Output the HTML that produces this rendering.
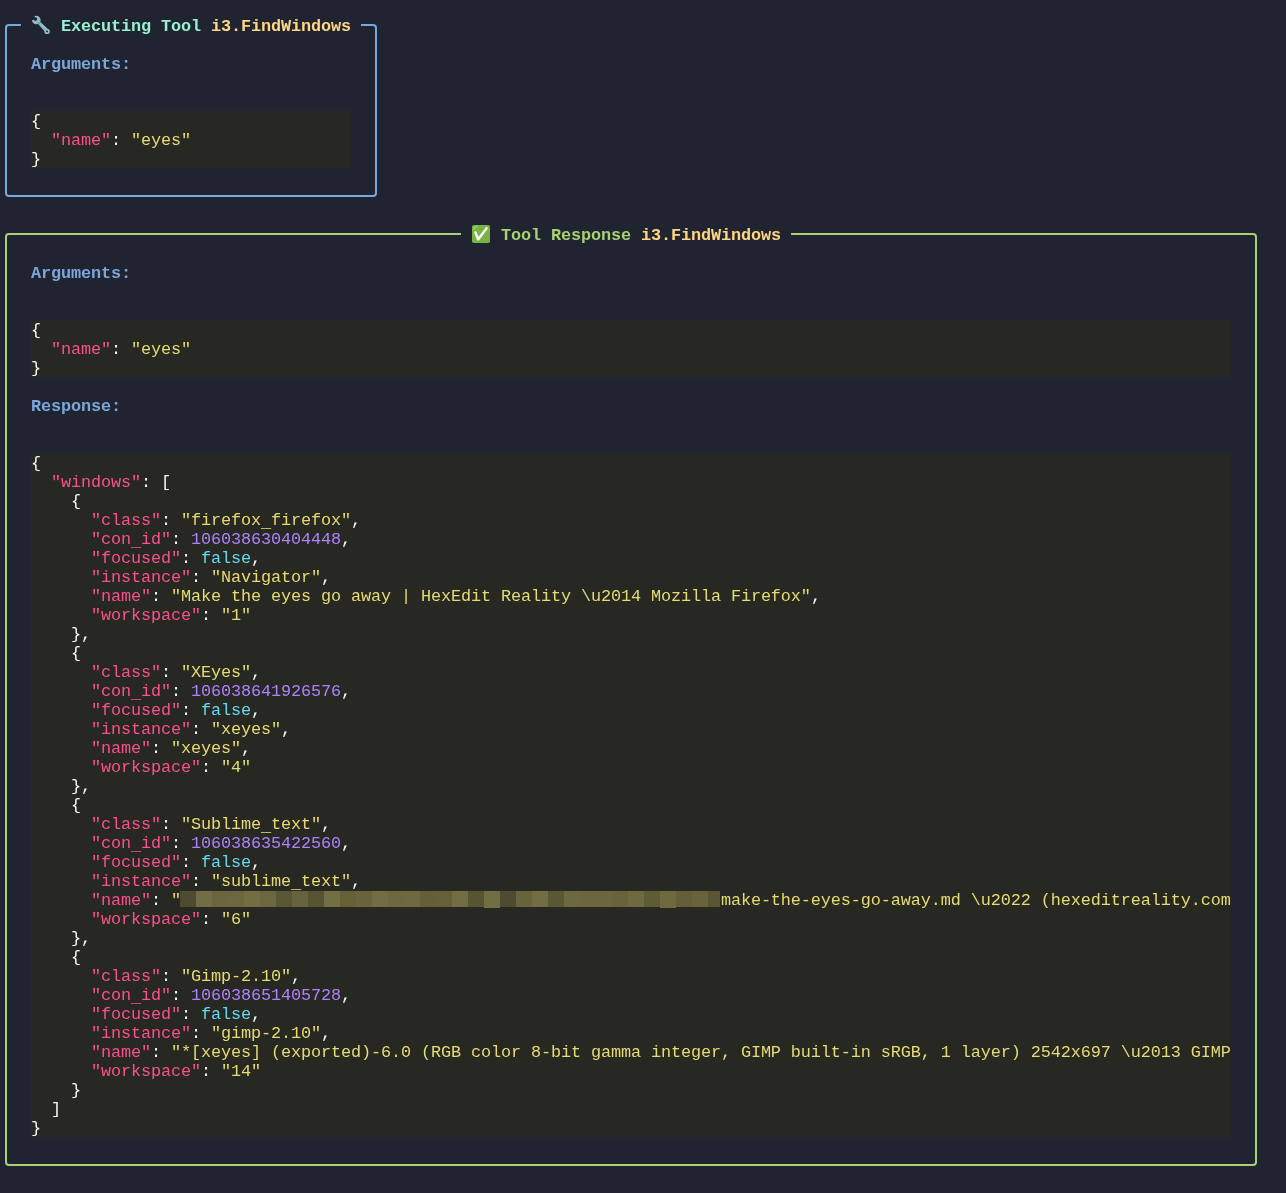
<!DOCTYPE html>
<html><head><meta charset="utf-8"><style>
html,body{margin:0;padding:0;background:#202330;width:1286px;height:1193px;overflow:hidden;position:relative}
.ln{position:absolute;white-space:pre;font-family:"Liberation Mono",monospace;font-size:16.85px;line-height:19px;height:19px;color:#f8f8f2}
.b{font-weight:bold}
.u{position:relative;top:2px}
.ln{letter-spacing:-0.11px;margin-top:1px;will-change:transform}
.box{position:absolute;box-sizing:border-box;border:2px solid;border-radius:4px}
</style></head><body>
<div class="box" style="left:5px;top:24px;width:372px;height:173px;border-color:#7aa8dc"></div>
<div style="position:absolute;left:21px;top:22px;width:340px;height:6px;background:#202330"></div>
<svg style="position:absolute;left:31px;top:15px" width="20" height="20" viewBox="0 0 20 20">
<defs><mask id="wm"><rect x="-5" y="-5" width="30" height="30" fill="#fff"/><circle cx="4.4" cy="4.1" r="1.8" fill="#000"/><path d="M4.4 4.1 L2.7 -1.5 L-3 -3 L-1.8 6.4 Z" fill="#000"/><circle cx="16" cy="16.4" r="0.95" fill="#000"/></mask>
<linearGradient id="wg" x1="0" y1="0" x2="1" y2="1"><stop offset="0" stop-color="#9cc6d2"/><stop offset="1" stop-color="#86b0c0"/></linearGradient></defs>
<g mask="url(#wm)" fill="url(#wg)">
<circle cx="5.3" cy="5.0" r="4.3"/>
<path d="M6.6 8.6 L8.8 6.6 L17.8 15.0 L15.0 17.8 Z" fill="#8fb9c8"/>
<circle cx="16.1" cy="16.4" r="2.7" fill="#8fb9c8"/>
<circle cx="8.3" cy="8.3" r="1.1" fill="#3f8c9c" opacity="0.55"/>
<path d="M9.6 7.9 L16.4 14.2" stroke="#b2d8e2" stroke-width="0.8" opacity="0.6"/>
</g>
</svg>
<div class="ln b" style="top:16px;left:61px"><span style="color:#98f0d2">Executing Tool </span><span style="color:#ffd782">i3.FindWindows</span></div>
<div class="ln b" style="top:54px;left:31px"><span style="color:#7aa8dc">Arguments:</span></div>
<div style="position:absolute;left:31px;top:111px;width:320px;height:57px;background:#272822"></div>
<div class="ln " style="top:111px;left:31px"><span style="color:#f8f8f2">{</span></div>
<div class="ln " style="top:130px;left:31px"><span style="color:#f8f8f2">  </span><span style="color:#fb508e">&quot;name&quot;</span><span style="color:#f8f8f2">: </span><span style="color:#e6db74">&quot;eyes&quot;</span></div>
<div class="ln " style="top:149px;left:31px"><span style="color:#f8f8f2">}</span></div>
<div class="box" style="left:5px;top:233px;width:1252px;height:933px;border-color:#a8d272"></div>
<div style="position:absolute;left:461px;top:231px;width:330px;height:6px;background:#202330"></div>
<svg style="position:absolute;left:472px;top:225px" width="18" height="18" viewBox="0 0 18 18">
<rect x="0" y="0" width="18" height="18" rx="1.8" fill="#7ab342"/>
<path d="M1.6 4.6 Q2.2 2.0 5.0 1.4" fill="none" stroke="#b9dc98" stroke-width="1.1" opacity="0.7" stroke-linecap="round"/>
<path d="M3.4 7.4 L6.1 14.4 L14.6 3.2" fill="none" stroke="#ffffff" stroke-width="2.4" stroke-linecap="round" stroke-linejoin="round"/>
</svg>
<div class="ln b" style="top:225px;left:501px"><span style="color:#a8d272">Tool Response </span><span style="color:#ffd782">i3.FindWindows</span></div>
<div class="ln b" style="top:263px;left:31px"><span style="color:#7aa8dc">Arguments:</span></div>
<div style="position:absolute;left:31px;top:320px;width:1200px;height:57px;background:#272822"></div>
<div class="ln " style="top:320px;left:31px"><span style="color:#f8f8f2">{</span></div>
<div class="ln " style="top:339px;left:31px"><span style="color:#f8f8f2">  </span><span style="color:#fb508e">&quot;name&quot;</span><span style="color:#f8f8f2">: </span><span style="color:#e6db74">&quot;eyes&quot;</span></div>
<div class="ln " style="top:358px;left:31px"><span style="color:#f8f8f2">}</span></div>
<div class="ln b" style="top:396px;left:31px"><span style="color:#7aa8dc">Response:</span></div>
<div style="position:absolute;left:31px;top:453px;width:1200px;height:684px;background:#272822"></div>
<div class="ln " style="top:453px;left:31px"><span style="color:#f8f8f2">{</span></div>
<div class="ln " style="top:472px;left:31px"><span style="color:#f8f8f2">  </span><span style="color:#fb508e">&quot;windows&quot;</span><span style="color:#f8f8f2">: </span><span style="color:#f8f8f2">[</span></div>
<div class="ln " style="top:491px;left:31px"><span style="color:#f8f8f2">    </span><span style="color:#f8f8f2">{</span></div>
<div class="ln " style="top:510px;left:31px"><span style="color:#f8f8f2">      </span><span style="color:#fb508e">&quot;class&quot;</span><span style="color:#f8f8f2">: </span><span style="color:#e6db74">&quot;firefox<span class="u">_</span>firefox&quot;</span><span style="color:#f8f8f2">,</span></div>
<div class="ln " style="top:529px;left:31px"><span style="color:#f8f8f2">      </span><span style="color:#fb508e">&quot;con<span class="u">_</span>id&quot;</span><span style="color:#f8f8f2">: </span><span style="color:#ae81ff">106038630404448</span><span style="color:#f8f8f2">,</span></div>
<div class="ln " style="top:548px;left:31px"><span style="color:#f8f8f2">      </span><span style="color:#fb508e">&quot;focused&quot;</span><span style="color:#f8f8f2">: </span><span style="color:#66d9ef">false</span><span style="color:#f8f8f2">,</span></div>
<div class="ln " style="top:567px;left:31px"><span style="color:#f8f8f2">      </span><span style="color:#fb508e">&quot;instance&quot;</span><span style="color:#f8f8f2">: </span><span style="color:#e6db74">&quot;Navigator&quot;</span><span style="color:#f8f8f2">,</span></div>
<div class="ln " style="top:586px;left:31px"><span style="color:#f8f8f2">      </span><span style="color:#fb508e">&quot;name&quot;</span><span style="color:#f8f8f2">: </span><span style="color:#e6db74">&quot;Make the eyes go away | HexEdit Reality \u2014 Mozilla Firefox&quot;</span><span style="color:#f8f8f2">,</span></div>
<div class="ln " style="top:605px;left:31px"><span style="color:#f8f8f2">      </span><span style="color:#fb508e">&quot;workspace&quot;</span><span style="color:#f8f8f2">: </span><span style="color:#e6db74">&quot;1&quot;</span></div>
<div class="ln " style="top:624px;left:31px"><span style="color:#f8f8f2">    </span><span style="color:#f8f8f2">},</span></div>
<div class="ln " style="top:643px;left:31px"><span style="color:#f8f8f2">    </span><span style="color:#f8f8f2">{</span></div>
<div class="ln " style="top:662px;left:31px"><span style="color:#f8f8f2">      </span><span style="color:#fb508e">&quot;class&quot;</span><span style="color:#f8f8f2">: </span><span style="color:#e6db74">&quot;XEyes&quot;</span><span style="color:#f8f8f2">,</span></div>
<div class="ln " style="top:681px;left:31px"><span style="color:#f8f8f2">      </span><span style="color:#fb508e">&quot;con<span class="u">_</span>id&quot;</span><span style="color:#f8f8f2">: </span><span style="color:#ae81ff">106038641926576</span><span style="color:#f8f8f2">,</span></div>
<div class="ln " style="top:700px;left:31px"><span style="color:#f8f8f2">      </span><span style="color:#fb508e">&quot;focused&quot;</span><span style="color:#f8f8f2">: </span><span style="color:#66d9ef">false</span><span style="color:#f8f8f2">,</span></div>
<div class="ln " style="top:719px;left:31px"><span style="color:#f8f8f2">      </span><span style="color:#fb508e">&quot;instance&quot;</span><span style="color:#f8f8f2">: </span><span style="color:#e6db74">&quot;xeyes&quot;</span><span style="color:#f8f8f2">,</span></div>
<div class="ln " style="top:738px;left:31px"><span style="color:#f8f8f2">      </span><span style="color:#fb508e">&quot;name&quot;</span><span style="color:#f8f8f2">: </span><span style="color:#e6db74">&quot;xeyes&quot;</span><span style="color:#f8f8f2">,</span></div>
<div class="ln " style="top:757px;left:31px"><span style="color:#f8f8f2">      </span><span style="color:#fb508e">&quot;workspace&quot;</span><span style="color:#f8f8f2">: </span><span style="color:#e6db74">&quot;4&quot;</span></div>
<div class="ln " style="top:776px;left:31px"><span style="color:#f8f8f2">    </span><span style="color:#f8f8f2">},</span></div>
<div class="ln " style="top:795px;left:31px"><span style="color:#f8f8f2">    </span><span style="color:#f8f8f2">{</span></div>
<div class="ln " style="top:814px;left:31px"><span style="color:#f8f8f2">      </span><span style="color:#fb508e">&quot;class&quot;</span><span style="color:#f8f8f2">: </span><span style="color:#e6db74">&quot;Sublime<span class="u">_</span>text&quot;</span><span style="color:#f8f8f2">,</span></div>
<div class="ln " style="top:833px;left:31px"><span style="color:#f8f8f2">      </span><span style="color:#fb508e">&quot;con<span class="u">_</span>id&quot;</span><span style="color:#f8f8f2">: </span><span style="color:#ae81ff">106038635422560</span><span style="color:#f8f8f2">,</span></div>
<div class="ln " style="top:852px;left:31px"><span style="color:#f8f8f2">      </span><span style="color:#fb508e">&quot;focused&quot;</span><span style="color:#f8f8f2">: </span><span style="color:#66d9ef">false</span><span style="color:#f8f8f2">,</span></div>
<div class="ln " style="top:871px;left:31px"><span style="color:#f8f8f2">      </span><span style="color:#fb508e">&quot;instance&quot;</span><span style="color:#f8f8f2">: </span><span style="color:#e6db74">&quot;sublime<span class="u">_</span>text&quot;</span><span style="color:#f8f8f2">,</span></div>
<div class="ln " style="top:890px;left:31px"><span style="color:#f8f8f2">      </span><span style="color:#fb508e">&quot;name&quot;</span><span style="color:#f8f8f2">: </span><span style="color:#e6db74">&quot;                                                      make-the-eyes-go-away.md \u2022 (hexeditreality.com</span></div>
<div class="ln " style="top:909px;left:31px"><span style="color:#f8f8f2">      </span><span style="color:#fb508e">&quot;workspace&quot;</span><span style="color:#f8f8f2">: </span><span style="color:#e6db74">&quot;6&quot;</span></div>
<div class="ln " style="top:928px;left:31px"><span style="color:#f8f8f2">    </span><span style="color:#f8f8f2">},</span></div>
<div class="ln " style="top:947px;left:31px"><span style="color:#f8f8f2">    </span><span style="color:#f8f8f2">{</span></div>
<div class="ln " style="top:966px;left:31px"><span style="color:#f8f8f2">      </span><span style="color:#fb508e">&quot;class&quot;</span><span style="color:#f8f8f2">: </span><span style="color:#e6db74">&quot;Gimp-2.10&quot;</span><span style="color:#f8f8f2">,</span></div>
<div class="ln " style="top:985px;left:31px"><span style="color:#f8f8f2">      </span><span style="color:#fb508e">&quot;con<span class="u">_</span>id&quot;</span><span style="color:#f8f8f2">: </span><span style="color:#ae81ff">106038651405728</span><span style="color:#f8f8f2">,</span></div>
<div class="ln " style="top:1004px;left:31px"><span style="color:#f8f8f2">      </span><span style="color:#fb508e">&quot;focused&quot;</span><span style="color:#f8f8f2">: </span><span style="color:#66d9ef">false</span><span style="color:#f8f8f2">,</span></div>
<div class="ln " style="top:1023px;left:31px"><span style="color:#f8f8f2">      </span><span style="color:#fb508e">&quot;instance&quot;</span><span style="color:#f8f8f2">: </span><span style="color:#e6db74">&quot;gimp-2.10&quot;</span><span style="color:#f8f8f2">,</span></div>
<div class="ln " style="top:1042px;left:31px"><span style="color:#f8f8f2">      </span><span style="color:#fb508e">&quot;name&quot;</span><span style="color:#f8f8f2">: </span><span style="color:#e6db74">&quot;*[xeyes] (exported)-6.0 (RGB color 8-bit gamma integer, GIMP built-in sRGB, 1 layer) 2542x697 \u2013 GIMP</span></div>
<div class="ln " style="top:1061px;left:31px"><span style="color:#f8f8f2">      </span><span style="color:#fb508e">&quot;workspace&quot;</span><span style="color:#f8f8f2">: </span><span style="color:#e6db74">&quot;14&quot;</span></div>
<div class="ln " style="top:1080px;left:31px"><span style="color:#f8f8f2">    </span><span style="color:#f8f8f2">}</span></div>
<div class="ln " style="top:1099px;left:31px"><span style="color:#f8f8f2">  </span><span style="color:#f8f8f2">]</span></div>
<div class="ln " style="top:1118px;left:31px"><span style="color:#f8f8f2">}</span></div>
<div style="position:absolute;left:180px;top:891px;width:16px;height:16px;background:#4f4b32"></div>
<div style="position:absolute;left:196px;top:891px;width:16px;height:16px;background:#726d44"></div>
<div style="position:absolute;left:212px;top:891px;width:16px;height:16px;background:#6a663f"></div>
<div style="position:absolute;left:228px;top:891px;width:16px;height:16px;background:#6b673f"></div>
<div style="position:absolute;left:244px;top:891px;width:16px;height:16px;background:#736e42"></div>
<div style="position:absolute;left:260px;top:891px;width:16px;height:16px;background:#6b6840"></div>
<div style="position:absolute;left:276px;top:891px;width:16px;height:16px;background:#5a5736"></div>
<div style="position:absolute;left:292px;top:891px;width:16px;height:16px;background:#67633c"></div>
<div style="position:absolute;left:308px;top:891px;width:16px;height:16px;background:#575434"></div>
<div style="position:absolute;left:324px;top:891px;width:16px;height:16px;background:#736f43"></div>
<div style="position:absolute;left:340px;top:891px;width:16px;height:16px;background:#64603a"></div>
<div style="position:absolute;left:356px;top:891px;width:16px;height:16px;background:#68643d"></div>
<div style="position:absolute;left:372px;top:891px;width:16px;height:16px;background:#716c41"></div>
<div style="position:absolute;left:388px;top:891px;width:16px;height:16px;background:#6c683f"></div>
<div style="position:absolute;left:404px;top:891px;width:16px;height:16px;background:#6e6a40"></div>
<div style="position:absolute;left:420px;top:891px;width:16px;height:16px;background:#636039"></div>
<div style="position:absolute;left:436px;top:891px;width:16px;height:16px;background:#646039"></div>
<div style="position:absolute;left:452px;top:891px;width:16px;height:16px;background:#716d42"></div>
<div style="position:absolute;left:468px;top:891px;width:16px;height:16px;background:#575434"></div>
<div style="position:absolute;left:484px;top:891px;width:16px;height:17px;background:#726e43"></div>
<div style="position:absolute;left:500px;top:891px;width:16px;height:16px;background:#4e4b31"></div>
<div style="position:absolute;left:516px;top:891px;width:16px;height:16px;background:#68643d"></div>
<div style="position:absolute;left:532px;top:891px;width:16px;height:16px;background:#716d42"></div>
<div style="position:absolute;left:548px;top:891px;width:16px;height:16px;background:#5a5736"></div>
<div style="position:absolute;left:564px;top:891px;width:16px;height:16px;background:#6c683f"></div>
<div style="position:absolute;left:580px;top:891px;width:16px;height:16px;background:#6a663e"></div>
<div style="position:absolute;left:596px;top:891px;width:16px;height:16px;background:#6a663e"></div>
<div style="position:absolute;left:612px;top:891px;width:16px;height:16px;background:#67633c"></div>
<div style="position:absolute;left:628px;top:891px;width:16px;height:16px;background:#6e6a40"></div>
<div style="position:absolute;left:644px;top:891px;width:16px;height:16px;background:#5e5b37"></div>
<div style="position:absolute;left:660px;top:891px;width:16px;height:17px;background:#6e6a40"></div>
<div style="position:absolute;left:676px;top:891px;width:16px;height:16px;background:#625f39"></div>
<div style="position:absolute;left:692px;top:891px;width:16px;height:16px;background:#67643c"></div>
<div style="position:absolute;left:708px;top:891px;width:12px;height:16px;background:#5a5635"></div>
</body></html>
